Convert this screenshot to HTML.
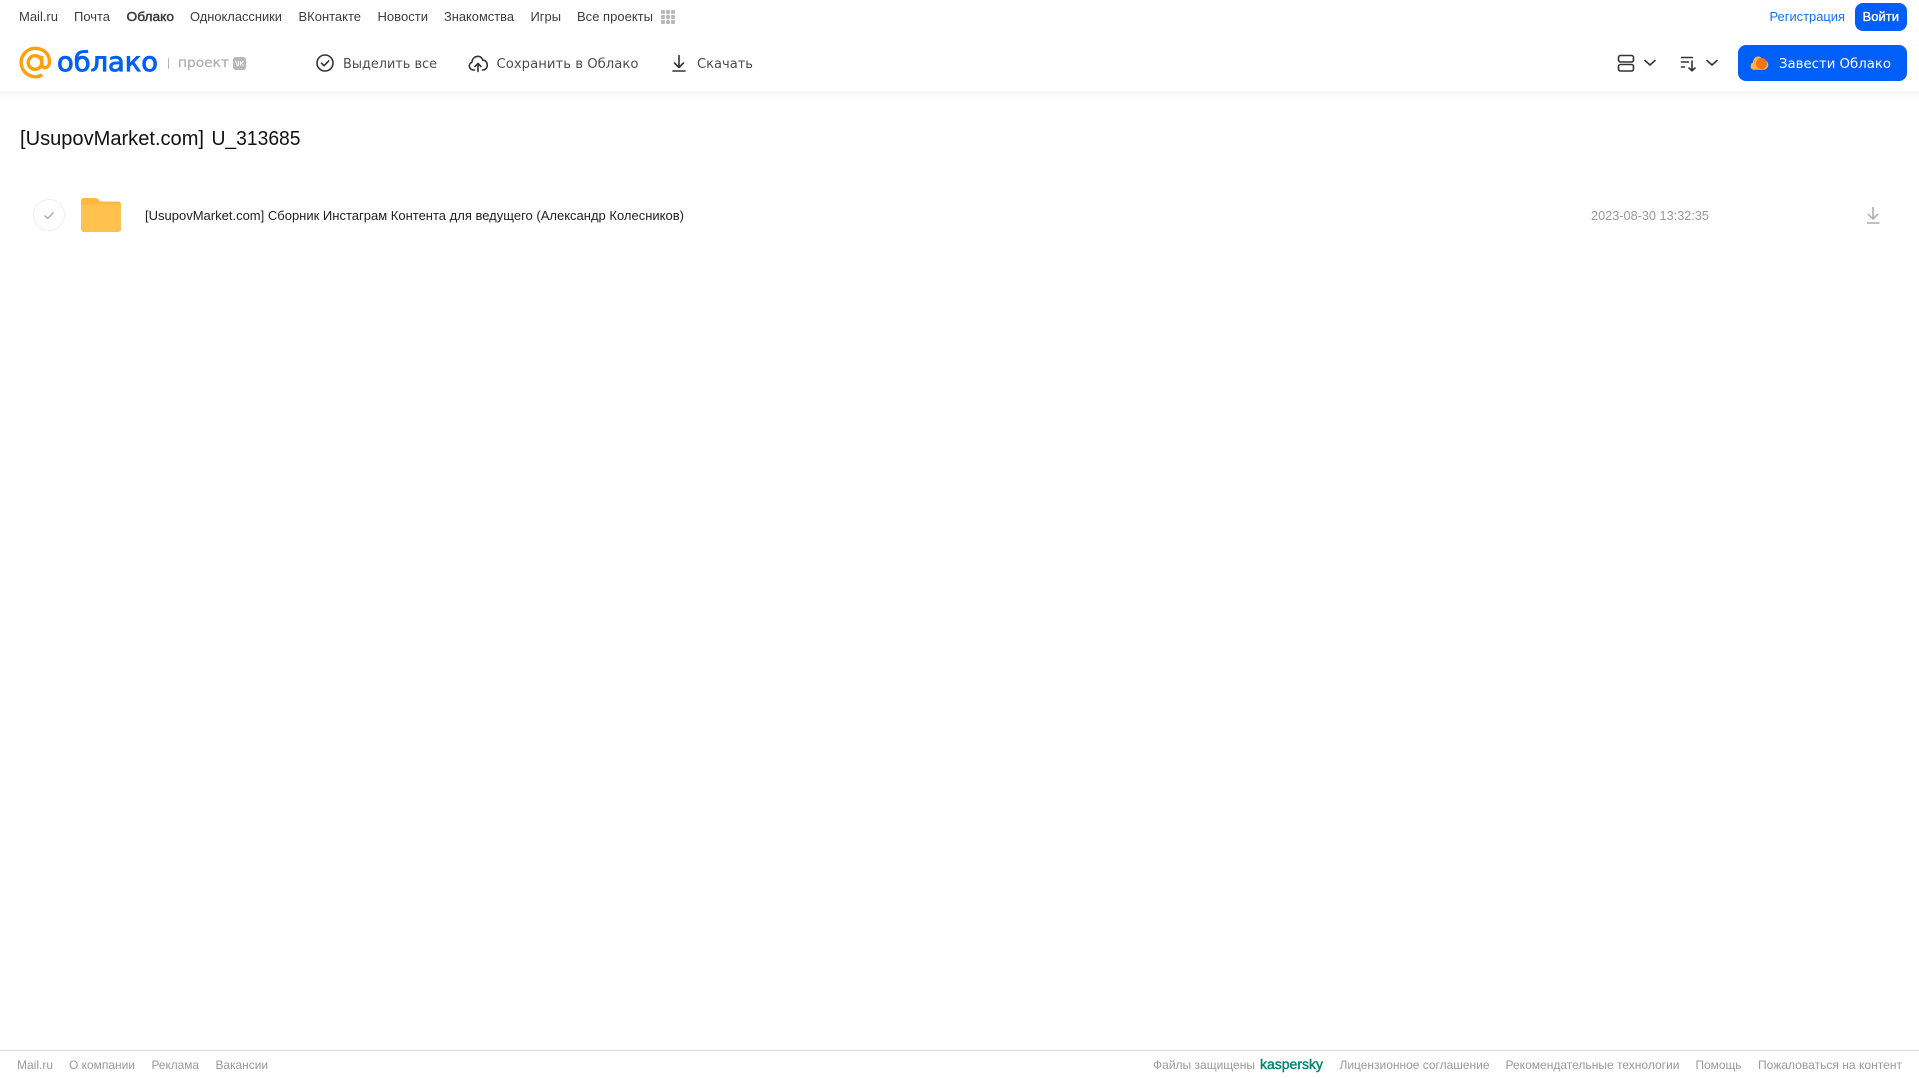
<!DOCTYPE html>
<html lang="ru">
<head>
<meta charset="utf-8">
<title>[UsupovMarket.com] U_313685</title>
<style>
html,body{margin:0;padding:0;width:1919px;height:1079px;overflow:hidden;background:#fff}
svg{display:block;position:absolute;left:0;top:0}
text{font-family:"Liberation Sans",sans-serif}
.n{font-size:13px;fill:#3d3d3d}
.t{font-family:"DejaVu Sans",sans-serif;font-size:13.5px;fill:#4d4d4d}
.f{font-size:12px;fill:#999}
.ic{fill:none;stroke:#333;stroke-width:1.6;stroke-linecap:round;stroke-linejoin:round}
</style>
</head>
<body>
<svg width="1919" height="1079" viewBox="0 0 1919 1079" xmlns="http://www.w3.org/2000/svg">
<defs>
<linearGradient id="sh" x1="0" y1="0" x2="0" y2="1"><stop offset="0" stop-color="#f3f3f3"/><stop offset="1" stop-color="#fff"/></linearGradient>
</defs>
<rect x="0" y="91" width="1919" height="7" fill="url(#sh)"/>

<!-- top nav -->
<text class="n" x="19" y="21" textLength="39" lengthAdjust="spacingAndGlyphs">Mail.ru</text>
<text class="n" x="74" y="21" textLength="36" lengthAdjust="spacingAndGlyphs">Почта</text>
<text class="n" x="126.500" y="21" textLength="47.500" lengthAdjust="spacingAndGlyphs" stroke="#333" stroke-width=".4">Облако</text>
<text class="n" x="190" y="21" textLength="92" lengthAdjust="spacingAndGlyphs">Одноклассники</text>
<text class="n" x="298.500" y="21" textLength="62.500" lengthAdjust="spacingAndGlyphs">ВКонтакте</text>
<text class="n" x="377.500" y="21" textLength="50.500" lengthAdjust="spacingAndGlyphs">Новости</text>
<text class="n" x="444" y="21" textLength="70" lengthAdjust="spacingAndGlyphs">Знакомства</text>
<text class="n" x="530.500" y="21" textLength="30.500" lengthAdjust="spacingAndGlyphs">Игры</text>
<text class="n" x="577" y="21" textLength="76" lengthAdjust="spacingAndGlyphs">Все проекты</text>
<g fill="#b8b8b8">
<rect x="661" y="10" width="4" height="4" rx="1"/><rect x="666" y="10" width="4" height="4" rx="1"/><rect x="671" y="10" width="4" height="4" rx="1"/>
<rect x="661" y="15" width="4" height="4" rx="1"/><rect x="666" y="15" width="4" height="4" rx="1"/><rect x="671" y="15" width="4" height="4" rx="1"/>
<rect x="661" y="20" width="4" height="4" rx="1"/><rect x="666" y="20" width="4" height="4" rx="1"/><rect x="671" y="20" width="4" height="4" rx="1"/>
</g>
<text x="1769.500" y="21" font-size="13" fill="#1a6ff0" textLength="75.500" lengthAdjust="spacingAndGlyphs">Регистрация</text>
<rect x="1855" y="3" width="52" height="28" rx="8" fill="#005ff9"/>
<text x="1862.500" y="21" font-size="13" fill="#fff" stroke="#fff" stroke-width=".35" textLength="36.500" lengthAdjust="spacingAndGlyphs">Войти</text>

<!-- logo -->
<g fill="none" stroke="#ffa00f" stroke-width="3.400">
<circle cx="35" cy="62.500" r="6.800"/>
<path d="M41.800 55.700v8.300c0 5.200 7.200 5.200 7.600-1.500.5-8.500-6-14.200-14.200-14.200a14.200 14.200 0 1 0 7.200 26.500"/>
</g>
<text x="57" y="71" font-size="26.500" fill="#005ff9" stroke="#005ff9" stroke-width=".9" style="font-family:'DejaVu Sans',sans-serif" textLength="101" lengthAdjust="spacingAndGlyphs">облако</text>
<rect x="168" y="58" width="1" height="11" fill="#b5b5b5"/>
<text x="178" y="67" font-size="13.500" fill="#b0b0b0" stroke="#b0b0b0" stroke-width=".25" style="font-family:'DejaVu Sans',sans-serif" textLength="51" lengthAdjust="spacingAndGlyphs">проект</text>
<rect x="233" y="57" width="13" height="13" rx="3" fill="#b8b8b8"/>
<path d="M235.500 61l1.800 4.600h1v-4.600M243.500 61l-2.200 2.200 2.400 2.600M240.500 61v4.600" fill="none" stroke="#fff" stroke-width="1"/>

<!-- toolbar -->
<circle class="ic" cx="325" cy="63" r="8"/>
<path class="ic" d="M321.500 63.200l2.600 2.500 4.600-4.800"/>
<text class="t" x="343" y="68" textLength="94" lengthAdjust="spacingAndGlyphs">Выделить все</text>
<path class="ic" d="M474.500 70h-.8c-5 0-5.800-6.300-1.800-7.800.6-6.800 9.200-8 11-2 5-.4 6.500 8.800 .4 9.800h-.8"/>
<path class="ic" d="M478 71.500v-7.500M475 66.500l3-3 3 3"/>
<text class="t" x="496.500" y="68" textLength="142" lengthAdjust="spacingAndGlyphs">Сохранить в Облако</text>
<path class="ic" d="M679 55.500v12M674.500 63l4.500 4.500 4.500-4.500M673 71h12"/>
<text class="t" x="697" y="68" textLength="56" lengthAdjust="spacingAndGlyphs">Скачать</text>

<!-- right controls -->
<rect x="1618.500" y="55.500" width="15" height="6.500" rx="2" class="ic"/>
<rect x="1618.500" y="64.500" width="15" height="6.500" rx="2" class="ic"/>
<path class="ic" d="M1645 60.500l5 4.500 5-4.500"/>
<path class="ic" d="M1681.500 57.500h11M1681.500 62h7M1681.500 67h3M1692 61v9.500M1689 68l3 2.800 3-2.800" stroke-width="1.300"/>
<path class="ic" d="M1707 60.500l5 4.500 5-4.500"/>
<rect x="1738" y="45" width="169" height="36" rx="8" fill="#005ff9"/>
<path d="M1752.500 69.500c-2.500-1-2.700-5.500.3-7 .6-3.700 2.700-6 5.200-6 2.400 0 3.800 1.500 4.500 3.300 3.500-.3 6 2.300 5.800 5.200-.2 2.900-2.300 4.800-5 4.800h-9c-.7 0-1.300 0-1.800-.3z" fill="#ffb340"/>
<circle cx="1761.500" cy="63.500" r="5.500" fill="#f4711f"/>
<text x="1779" y="68" class="t" style="fill:#fff" textLength="112" lengthAdjust="spacingAndGlyphs">Завести Облако</text>

<!-- title -->
<text x="20" y="145" font-size="20" fill="#111" textLength="184" lengthAdjust="spacingAndGlyphs">[UsupovMarket.com]</text>
<text x="211.500" y="145" font-size="20" fill="#111" textLength="89" lengthAdjust="spacingAndGlyphs">U_313685</text>

<!-- row -->
<circle cx="49" cy="215" r="15.500" fill="#fff" stroke="#eeeeee" stroke-width="1"/>
<path d="M44.500 215.500l3.200 3 5.800-6" fill="none" stroke="#a8a8a8" stroke-width="1.300"/>
<path d="M81 201a3 3 0 0 1 3-3h11c2 0 3 1 4 2l1.500 1.500H118a3 3 0 0 1 3 3v24.500a3 3 0 0 1-3 3H84a3 3 0 0 1-3-3z" fill="#ffb840"/>
<path d="M81 206.500a2 2 0 0 1 2-2h36a2 2 0 0 1 2 2V229a3 3 0 0 1-3 3H84a3 3 0 0 1-3-3z" fill="#ffc24f"/>
<text x="145" y="220" font-size="12.500" fill="#222" textLength="539" lengthAdjust="spacingAndGlyphs">[UsupovMarket.com] Сборник Инстаграм Контента для ведущего (Александр Колесников)</text>
<text x="1591" y="220" font-size="12.500" fill="#999" textLength="118" lengthAdjust="spacingAndGlyphs">2023-08-30 13:32:35</text>
<path d="M1873 207v12M1868 214l5 5 5-5M1867 223h12.500" fill="none" stroke="#aaa" stroke-width="1.500"/>

<!-- footer -->
<rect x="0" y="1050" width="1919" height="1" fill="#d9d9d9"/>
<text class="f" x="17" y="1069" textLength="36" lengthAdjust="spacingAndGlyphs">Mail.ru</text>
<text class="f" x="69" y="1069" textLength="66" lengthAdjust="spacingAndGlyphs">О компании</text>
<text class="f" x="151.500" y="1069" textLength="47.500" lengthAdjust="spacingAndGlyphs">Реклама</text>
<text class="f" x="215.500" y="1069" textLength="52.500" lengthAdjust="spacingAndGlyphs">Вакансии</text>
<text class="f" x="1153" y="1069" textLength="102" lengthAdjust="spacingAndGlyphs">Файлы защищены</text>
<text x="1260" y="1069" font-size="13.500" fill="#00856f" stroke="#00856f" stroke-width=".4" textLength="63" lengthAdjust="spacingAndGlyphs">kaspersky</text>
<text class="f" x="1339.500" y="1069" textLength="150" lengthAdjust="spacingAndGlyphs">Лицензионное соглашение</text>
<text class="f" x="1505.500" y="1069" textLength="174" lengthAdjust="spacingAndGlyphs">Рекомендательные технологии</text>
<text class="f" x="1695.500" y="1069" textLength="46" lengthAdjust="spacingAndGlyphs">Помощь</text>
<text class="f" x="1758" y="1069" textLength="144" lengthAdjust="spacingAndGlyphs">Пожаловаться на контент</text>
</svg>
</body>
</html>
